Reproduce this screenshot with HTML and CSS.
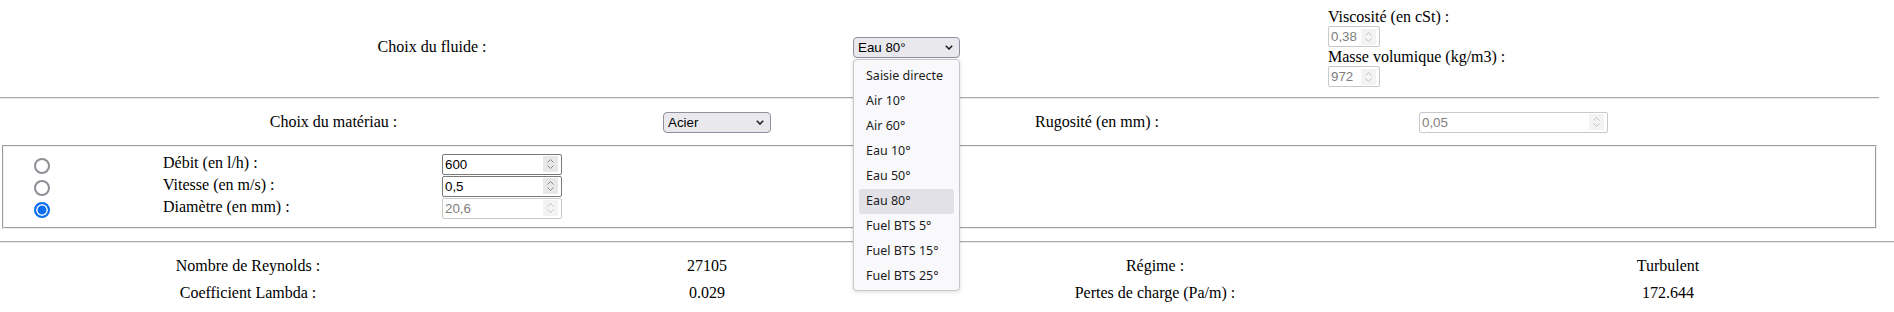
FILE: index.html
```html
<!DOCTYPE html>
<html lang="fr">
<head>
<meta charset="utf-8">
<title>Calcul des pertes de charge</title>
<link rel="stylesheet" href="styles.css">
</head>
<body>
<div class="top">
  <section class="row-fluid">
    <label class="lbl lbl-fluid" for="fluide">Choix du fluide :</label>
    <div class="cell">
      <div class="sel sel-fluid">
        <select id="fluide" class="sel-in">
          <option>Saisie directe</option>
          <option>Air 10°</option>
          <option>Air 60°</option>
          <option>Eau 10°</option>
          <option>Eau 50°</option>
          <option selected>Eau 80°</option>
          <option>Fuel BTS 5°</option>
          <option>Fuel BTS 15°</option>
          <option>Fuel BTS 25°</option>
        </select>
        <svg class="chev" width="8" height="5" viewBox="0 0 8 5"><path d="M0.8 0.8L4 4L7.2 0.8"/></svg>
        <ul class="dropdown">
          <li>Saisie directe</li>
          <li>Air 10°</li>
          <li>Air 60°</li>
          <li>Eau 10°</li>
          <li>Eau 50°</li>
          <li class="on">Eau 80°</li>
          <li>Fuel BTS 5°</li>
          <li>Fuel BTS 15°</li>
          <li>Fuel BTS 25°</li>
        </ul>
      </div>
    </div>
    <div class="props">
      <div class="plbl">Viscosité (en cSt) :</div>
      <span class="num num-sm dis"><input class="num-in" type="text" value="0,38" disabled><span class="spin"><svg width="7" height="4" viewBox="0 0 7 4"><path d="M0.5 3.5L3.5 0.5L6.5 3.5"/></svg><svg width="7" height="4" viewBox="0 0 7 4"><path d="M0.5 0.5L3.5 3.5L6.5 0.5"/></svg></span></span>
      <div class="plbl">Masse volumique (kg/m3) :</div>
      <span class="num num-sm dis"><input class="num-in" type="text" value="972" disabled><span class="spin"><svg width="7" height="4" viewBox="0 0 7 4"><path d="M0.5 3.5L3.5 0.5L6.5 3.5"/></svg><svg width="7" height="4" viewBox="0 0 7 4"><path d="M0.5 0.5L3.5 3.5L6.5 0.5"/></svg></span></span>
    </div>
  </section>
  <hr class="rule rule-top">
  <section class="row-mat">
    <label class="lbl lbl-mat" for="materiau">Choix du matériau :</label>
    <div class="cell">
      <div class="sel sel-mat">
        <select id="materiau" class="sel-in">
          <option selected>Acier</option>
          <option>Fonte</option>
          <option>PVC</option>
          <option>Cuivre</option>
        </select>
        <svg class="chev" width="8" height="5" viewBox="0 0 8 5"><path d="M0.8 0.8L4 4L7.2 0.8"/></svg>
      </div>
    </div>
    <div class="lbl lbl-rug">Rugosité (en mm) :</div>
    <div class="cell">
      <span class="num num-rug dis"><input class="num-in" type="text" value="0,05" disabled><span class="spin"><svg width="7" height="4" viewBox="0 0 7 4"><path d="M0.5 3.5L3.5 0.5L6.5 3.5"/></svg><svg width="7" height="4" viewBox="0 0 7 4"><path d="M0.5 0.5L3.5 3.5L6.5 0.5"/></svg></span></span>
    </div>
  </section>
  <fieldset class="calc">
    <div class="calc-grid">
      <input class="radio" type="radio" name="inconnue">
      <label class="flbl">Débit (en l/h) :</label>
      <span class="num num-f"><input class="num-in" type="text" value="600"><span class="spin"><svg width="7" height="4" viewBox="0 0 7 4"><path d="M0.5 3.5L3.5 0.5L6.5 3.5"/></svg><svg width="7" height="4" viewBox="0 0 7 4"><path d="M0.5 0.5L3.5 3.5L6.5 0.5"/></svg></span></span>

      <input class="radio" type="radio" name="inconnue">
      <label class="flbl">Vitesse (en m/s) :</label>
      <span class="num num-f"><input class="num-in" type="text" value="0,5"><span class="spin"><svg width="7" height="4" viewBox="0 0 7 4"><path d="M0.5 3.5L3.5 0.5L6.5 3.5"/></svg><svg width="7" height="4" viewBox="0 0 7 4"><path d="M0.5 0.5L3.5 3.5L6.5 0.5"/></svg></span></span>

      <input class="radio" type="radio" name="inconnue" checked>
      <label class="flbl">Diamètre (en mm) :</label>
      <span class="num num-f dis"><input class="num-in" type="text" value="20,6" disabled><span class="spin"><svg width="7" height="4" viewBox="0 0 7 4"><path d="M0.5 3.5L3.5 0.5L6.5 3.5"/></svg><svg width="7" height="4" viewBox="0 0 7 4"><path d="M0.5 0.5L3.5 3.5L6.5 0.5"/></svg></span></span>
    </div>
  </fieldset>
</div>
<hr class="rule rule-bottom">
<section class="results">
  <div>Nombre de Reynolds :</div>
  <div>27105</div>
  <div>Régime :</div>
  <div class="last">Turbulent</div>
  <div>Coefficient Lambda :</div>
  <div>0.029</div>
  <div>Pertes de charge (Pa/m) :</div>
  <div class="last">172.644</div>
</section>
</body>
</html>
```

FILE: styles.css
```css
* { box-sizing: border-box; }

html, body {
  margin: 0;
  padding: 0;
  background: #fff;
}

body {
  font-family: "Liberation Serif", "Times New Roman", serif;
  font-size: 16px;
  color: #000;
  overflow: hidden;
}

.top {
  width: 1879px;
}

/* ---------- row 1 : fluid ---------- */
.row-fluid {
  display: grid;
  grid-template-columns: 853px 475px 1fr;
  align-items: center;
  height: 87px;
  padding-top: 7px;
}

.lbl-fluid {
  text-align: center;
  padding-left: 11px;
}

.props {
  display: flex;
  flex-direction: column;
  align-items: flex-start;
}

.plbl {
  line-height: 19px;
  height: 19px;
  white-space: nowrap;
}

/* ---------- rules ---------- */
.rule {
  display: block;
  height: 0;
  margin: 0;
  border: 0;
  border-top: 1px solid #a8a8a8;
  border-bottom: 1px solid #ececec;
}

.rule-top { margin-top: 10px; }
.rule-bottom { margin-top: 12px; }

/* ---------- row 2 : material ---------- */
.row-mat {
  display: grid;
  grid-template-columns: 663px 372px 384px 1fr;
  align-items: center;
  height: 46px;
}

.lbl-mat {
  text-align: center;
  padding-left: 4px;
}

.lbl-rug {
  white-space: nowrap;
}

/* ---------- select ---------- */
.sel {
  position: relative;
  display: flex;
  align-items: center;
  height: 21px;
  border: 1px solid #8f8f9d;
  border-radius: 4px;
  background: #e9e9ed;
  padding: 0 6px 0 4px;
}

.sel-fluid { width: 107px; }
.sel-mat { width: 108px; }

.sel-in {
  -webkit-appearance: none;
  appearance: none;
  flex: 1;
  min-width: 0;
  border: 0;
  margin: 0;
  padding: 0;
  background: transparent;
  font: 13.33px "Liberation Sans", Arial, sans-serif;
  color: #000;
  outline: none;
}

.chev {
  flex: none;
  fill: none;
  stroke: #1a1a1a;
  stroke-width: 1.5;
}

/* open list of the fluid select */
.dropdown {
  position: absolute;
  top: calc(100% + 2px);
  left: -1px;
  z-index: 10;
  width: 107px;
  margin: 0;
  padding: 4px 5px 1px;
  list-style: none;
  background: #f9f9fb;
  border: 1px solid #c6c6cc;
  border-radius: 4px;
  box-shadow: 0 1px 4px rgba(0, 0, 0, 0.14);
}

.dropdown li {
  height: 25px;
  line-height: 22px;
  padding: 3px 0 0 7px;
  border-radius: 3px;
  font: 12.5px "Noto Sans", "Open Sans", sans-serif;
  color: #1c1c1c;
  white-space: nowrap;
}

.dropdown li.on {
  background: #e1e1e7;
}

/* ---------- number fields ---------- */
.num {
  display: flex;
  align-items: center;
  height: 21px;
  border: 1px solid #7a7a7a;
  border-radius: 2px;
  background: #fff;
  padding: 0 3px 0 2px;
}

.num-sm { width: 52px; }
.num-f { width: 120px; }
.num-rug { width: 189px; }

.num-in {
  flex: 1;
  min-width: 0;
  height: 100%;
  border: 0;
  margin: 0;
  padding: 0;
  background: transparent;
  font: 13.33px "Liberation Sans", Arial, sans-serif;
  color: #000;
  outline: none;
}

.spin {
  flex: none;
  width: 15px;
  height: 16px;
  display: flex;
  flex-direction: column;
  align-items: center;
  justify-content: center;
  gap: 2px;
  background: #e8e8e8;
}

.spin svg {
  display: block;
  fill: none;
  stroke: #8a8a8a;
  stroke-width: 1;
}

.num.dis {
  border-color: #c9c9c9;
}

.num.dis .num-in {
  color: #7e7e7e;
}

.num.dis .spin {
  background: #f3f3f3;
}

.num.dis .spin svg {
  stroke: #c2c2c2;
}

/* ---------- fieldset ---------- */
.calc {
  margin: 0 2px;
  padding: 6px 12px 8px;
  border: 2px groove #f0f0f0;
  min-width: 0;
}

.calc-grid {
  display: grid;
  grid-template-columns: 147px 279px 120px;
  grid-auto-rows: 22px;
  align-items: center;
}

.radio {
  -webkit-appearance: none;
  appearance: none;
  width: 16px;
  height: 16px;
  margin: 4px 0 0 18px;
  border: 2px solid #8e8e96;
  border-radius: 50%;
  background: #fff;
}

.radio:checked {
  border-color: #0b6ff0;
  background: #0b6ff0;
  box-shadow: inset 0 0 0 1.5px #fff;
}

.flbl {
  white-space: nowrap;
  margin-top: -2px;
}

/* ---------- results ---------- */
.results {
  display: grid;
  grid-template-columns: 496px 422px 474px 1fr;
  grid-auto-rows: 27px;
  align-items: center;
  padding-top: 9px;
  text-align: center;
}

.results .last {
  padding-left: 50px;
}
```
